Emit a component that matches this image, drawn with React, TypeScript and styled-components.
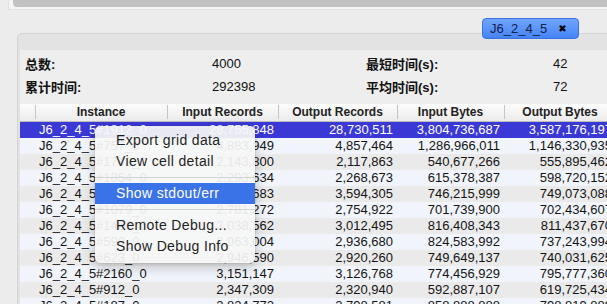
import React from "react";
import styled, { createGlobalStyle } from "styled-components";

const Global = createGlobalStyle`
  html, body { margin: 0; padding: 0; background: #ececec; }
  body { font-family: "Liberation Sans", Arial, sans-serif; overflow: hidden; }
`;

const Root = styled.div`
  position: relative;
  width: 607px;
  height: 304px;
  overflow: hidden;
  display: flex;
  flex-direction: column;
  background: #ececec;
`;

const TopPane = styled.div`
  height: 10px;
  margin-left: 8px;
  padding-left: 4px;
  background: #f5f5f5;
  border-left: 1px solid #e0e0e0;
  border-bottom: 1px solid #e2e2e2;
  box-sizing: border-box;
`;

const ScrollBar = styled.div`
  height: 7px;
  background: #c2c2c2;
  border-bottom-left-radius: 4px;
`;

const TabBar = styled.div`
  height: 23px;
  display: flex;
  flex-direction: column;
  align-items: flex-end;
`;

const Grip = styled.div`
  margin-top: 2px;
  margin-right: 67px;
  width: 17px;
  height: 3px;
  background-image: radial-gradient(circle, #b0b0b0 0.6px, transparent 0.9px);
  background-size: 3px 3px;
`;

const Tab = styled.div`
  position: relative;
  z-index: 2;
  margin-top: 6px;
  margin-right: 28px;
  width: 97px;
  height: 21px;
  box-sizing: border-box;
  border: 1px solid #3a72e2;
  border-radius: 4px;
  background: linear-gradient(#71a6fc, #4584f8);
  display: flex;
  align-items: center;
  padding-left: 7px;
  gap: 11px;
  font-size: 13px;
  color: #13204a;
  flex-shrink: 0;
`;

const TabClose = styled.span`
  font-family: "DejaVu Sans", sans-serif;
  font-weight: bold;
  font-size: 10px;
  color: #000;
`;

const Panel = styled.div`
  flex: 1;
  margin-left: 17px;
  border-top: 1px solid #d4d4d4;
  border-left: 1px solid #d4d4d4;
  border-top-left-radius: 5px;
  background: #e3e3e3;
  display: flex;
  flex-direction: column;
  min-height: 0;
`;

const PanelHeader = styled.div`
  height: 16px;
  flex-shrink: 0;
`;

const PanelBody = styled.div`
  flex: 1;
  margin-left: 2px;
  background: #eeeeee;
  display: flex;
  flex-direction: column;
  min-height: 0;
`;

const Stats = styled.div`
  display: grid;
  grid-template-columns: 187px 154px 187px 1fr;
  grid-auto-rows: 23px;
  align-items: center;
  padding: 2px 0 6px 5px;
  font-size: 13px;
  color: #111;
`;

const StatLabel = styled.div`
  font-family: "Liberation Sans", "Noto Sans CJK SC", sans-serif;
  font-weight: bold;
`;

const StatValue = styled.div``;

const Table = styled.div`
  display: flex;
  flex-direction: column;
  width: 596px;
`;

const HeaderRow = styled.div`
  display: flex;
  height: 18px;
  box-sizing: border-box;
  background: linear-gradient(#fcfcfc, #ebebeb);
  border-bottom: 1px solid #bdbdbd;
`;

const HeaderCell = styled.div<{ $w: number; $first?: boolean }>`
  position: relative;
  width: ${(p) => p.$w}px;
  flex-shrink: 0;
  text-align: center;
  font-size: 12px;
  font-weight: bold;
  color: #222;
  line-height: 17px;
  &::before {
    content: "";
    display: ${(p) => (p.$first ? "none" : "block")};
    position: absolute;
    left: 0;
    top: 1px;
    bottom: 2px;
    width: 1px;
    background: #c6c6c6;
  }
`;

const Row = styled.div<{ $variant: "sel" | "odd" | "even" }>`
  display: flex;
  height: 16px;
  background: ${(p) =>
    p.$variant === "sel" ? "#3b39d6" : p.$variant === "odd" ? "#f1f4fa" : "#eaeaea"};
  color: ${(p) => (p.$variant === "sel" ? "#ffffff" : "#141414")};
  font-size: 13px;
  line-height: 16px;
`;

const Cell = styled.div<{ $w: number; $align: "left" | "right" }>`
  width: ${(p) => p.$w}px;
  flex-shrink: 0;
  box-sizing: border-box;
  white-space: nowrap;
  overflow: hidden;
  text-align: ${(p) => p.$align};
  padding: ${(p) => (p.$align === "left" ? "0 0 0 4px" : "0 4px 0 0")};
`;

const Menu = styled.div`
  position: absolute;
  left: 95px;
  top: 126px;
  width: 160px;
  padding: 4px 0 6px;
  box-sizing: border-box;
  background: rgba(246, 246, 246, 0.93);
  border-radius: 5px;
  box-shadow: 0 0 0 0.5px rgba(0, 0, 0, 0.12), 0 4px 12px rgba(0, 0, 0, 0.22);
  z-index: 5;
`;

const MenuItem = styled.div<{ $active?: boolean }>`
  height: 21px;
  line-height: 21px;
  padding-left: 21px;
  font-size: 14px;
  letter-spacing: 0.35px;
  color: ${(p) => (p.$active ? "#ffffff" : "#1e1e1e")};
  background: ${(p) => (p.$active ? "#3a72e8" : "transparent")};
`;

const MenuSep = styled.div`
  height: 11px;
  display: flex;
  align-items: center;
  &::after {
    content: "";
    flex: 1;
    height: 1px;
    background: #d3d3d3;
  }
`;

const widths = [15, 132, 111, 119, 107, 112];
const headers = ["", "Instance", "Input Records", "Output Records", "Input Bytes", "Output Bytes"];

const rows: string[][] = [
  ["J6_2_4_5#1912_0", "28,755,848", "28,730,511", "3,804,736,687", "3,587,176,197"],
  ["J6_2_4_5#757_0", "4,883,949", "4,857,464", "1,286,966,011", "1,146,330,935"],
  ["J6_2_4_5#1742_0", "2,143,800", "2,117,863", "540,677,266", "555,895,462"],
  ["J6_2_4_5#1854_0", "2,293,634", "2,268,673", "615,378,387", "598,720,152"],
  ["J6_2_4_5#2043_0", "3,617,683", "3,594,305", "746,215,999", "749,073,088"],
  ["J6_2_4_5#1079_0", "2,781,272", "2,754,922", "701,739,900", "702,434,607"],
  ["J6_2_4_5#1466_0", "3,038,562", "3,012,495", "816,408,343", "811,437,670"],
  ["J6_2_4_5#590_0", "2,963,004", "2,936,680", "824,583,992", "737,243,994"],
  ["J6_2_4_5#623_0", "2,946,590", "2,920,260", "749,649,137", "740,031,625"],
  ["J6_2_4_5#2160_0", "3,151,147", "3,126,768", "774,456,929", "795,777,360"],
  ["J6_2_4_5#912_0", "2,347,309", "2,320,940", "592,887,107", "619,725,434"],
  ["J6_2_4_5#187_0", "2,824,772", "2,798,581", "858,888,888", "798,819,889"],
];

export default function App() {
  return (
    <Root>
      <Global />
      <TopPane>
        <ScrollBar />
      </TopPane>
      <TabBar>
        <Grip />
        <Tab>
          <span>J6_2_4_5</span>
          <TabClose>✖</TabClose>
        </Tab>
      </TabBar>
      <Panel>
        <PanelHeader />
        <PanelBody>
          <Stats>
            <StatLabel>总数:</StatLabel>
            <StatValue>4000</StatValue>
            <StatLabel>最短时间(s):</StatLabel>
            <StatValue>42</StatValue>
            <StatLabel>累计时间:</StatLabel>
            <StatValue>292398</StatValue>
            <StatLabel>平均时间(s):</StatLabel>
            <StatValue>72</StatValue>
          </Stats>
          <Table>
            <HeaderRow>
              {headers.map((h, i) => (
                <HeaderCell key={i} $w={widths[i]} $first={i === 0}>
                  {h}
                </HeaderCell>
              ))}
            </HeaderRow>
            {rows.map((r, i) => (
              <Row key={i} $variant={i === 0 ? "sel" : i % 2 === 1 ? "odd" : "even"}>
                <Cell $w={widths[0]} $align="left" />
                {r.map((v, j) => (
                  <Cell key={j} $w={widths[j + 1]} $align={j === 0 ? "left" : "right"}>
                    {v}
                  </Cell>
                ))}
              </Row>
            ))}
          </Table>
        </PanelBody>
      </Panel>
      <Menu>
        <MenuItem>Export grid data</MenuItem>
        <MenuItem>View cell detail</MenuItem>
        <MenuSep />
        <MenuItem $active>Show stdout/err</MenuItem>
        <MenuSep />
        <MenuItem>Remote Debug...</MenuItem>
        <MenuItem>Show Debug Info</MenuItem>
      </Menu>
    </Root>
  );
}
